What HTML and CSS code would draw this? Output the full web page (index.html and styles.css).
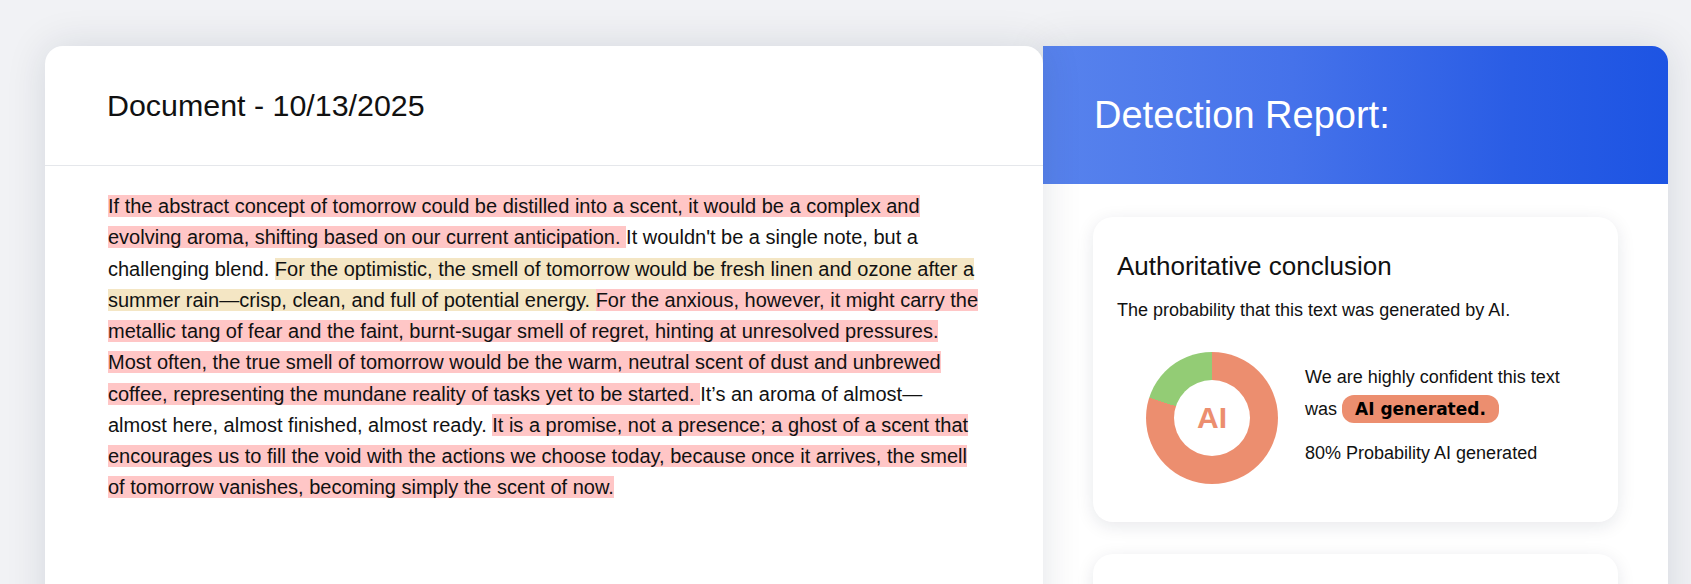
FILE: index.html
```html
<!DOCTYPE html>
<html lang="en">
<head>
<meta charset="utf-8">
<title>Detection Report</title>
<link rel="stylesheet" href="styles.css">
</head>
<body>
<div class="page">
  <section class="doc">
    <header class="doc-head">
      <h1 class="doc-title">Document - 10/13/2025</h1>
    </header>
    <div class="doc-body">
      <p class="doc-text"><span class="hl-red">If the abstract concept of tomorrow could be distilled into a scent, it would be a complex and evolving aroma, shifting based on our current anticipation. </span>It wouldn't be a single note, but a challenging blend. <span class="hl-yel">For the optimistic, the smell of tomorrow would be fresh linen and ozone after a summer rain—crisp, clean, and full of potential energy. </span><span class="hl-red">For the anxious, however, it might carry the metallic tang of fear and the faint, burnt-sugar smell of regret, hinting at unresolved pressures. </span><span class="hl-red">Most often, the true smell of tomorrow would be the warm, neutral scent of dust and unbrewed coffee, representing the mundane reality of tasks yet to be started. </span>It’s an aroma of almost—almost here, almost finished, almost ready. <span class="hl-red">It is a promise, not a presence; a ghost of a scent that encourages us to fill the void with the actions we choose today, because once it arrives, the smell of tomorrow vanishes, becoming simply the scent of now.</span></p>
    </div>
  </section>
  <aside class="report">
    <header class="report-head">
      <h2 class="report-title">Detection Report:</h2>
    </header>
    <div class="report-body">
      <div class="card">
        <h3 class="card-title">Authoritative conclusion</h3>
        <p class="card-desc">The probability that this text was generated by AI.</p>
        <div class="verdict">
          <div class="donut">
            <div class="donut-hole"><span class="donut-label">AI</span></div>
          </div>
          <div class="verdict-text">
            <p class="verdict-line">We are highly confident this text was <span class="badge">AI generated.</span></p>
            <p class="verdict-prob">80% Probability AI generated</p>
          </div>
        </div>
      </div>
      <div class="card card-next"></div>
    </div>
  </aside>
</div>
</body>
</html>
```
FILE: styles.css
```css
html, body {
  margin: 0;
  padding: 0;
}
body {
  background: #f1f2f5;
  font-family: "Liberation Sans", Arial, sans-serif;
  color: #111;
  overflow: hidden;
}
.page {
  display: flex;
  align-items: flex-start;
  padding: 46px 23px 0 45px;
}
.doc {
  width: 998px;
  flex: none;
  background: #fff;
  border-radius: 18px;
  box-shadow: 0 0 40px rgba(20, 30, 60, 0.12);
  position: relative;
  z-index: 1;
  min-height: 720px;
}
.doc-head {
  height: 119px;
  display: flex;
  align-items: center;
  padding: 0 62px;
  border-bottom: 1px solid #e5e7eb;
}
.doc-title {
  margin: 0;
  font-size: 30.4px;
  font-weight: 400;
  color: #111;
}
.doc-body {
  padding: 25px 63px 40px;
}
.doc-text {
  margin: 0;
  font-size: 20px;
  line-height: 31.25px;
}
.hl-red {
  background: #ffc6c6;
}
.hl-yel {
  background: #f4e6c4;
}
.report {
  flex: 1;
  background: #fff;
  border-radius: 0 16px 0 0;
  box-shadow: 0 0 40px rgba(20, 30, 60, 0.12);
  min-height: 720px;
}
.report-head {
  height: 138px;
  display: flex;
  align-items: center;
  padding-left: 51px;
  border-radius: 0 16px 0 0;
  background: linear-gradient(90deg, #5883ed 0%, #4572ea 40%, #2a5de5 75%, #1d54e3 100%);
}
.report-title {
  margin: 0;
  font-size: 38px;
  font-weight: 400;
  color: #fff;
}
.report-body {
  padding: 33px 50px;
  display: flex;
  flex-direction: column;
  gap: 32px;
}
.card {
  background: #fff;
  border-radius: 20px;
  box-shadow: 0 4px 18px rgba(20, 30, 60, 0.10);
  padding: 34px 24px 0;
  height: 305px;
  box-sizing: border-box;
}
.card-title {
  margin: 0;
  font-size: 26px;
  font-weight: 400;
  color: #111;
}
.card-desc {
  margin: 18px 0 0;
  font-size: 18px;
}
.verdict {
  margin-top: 31px;
  padding-left: 29px;
  display: flex;
  align-items: center;
  gap: 27px;
}
.donut {
  width: 132px;
  height: 132px;
  flex: none;
  border-radius: 50%;
  background: conic-gradient(#ec8e6f 0 80%, #93cc75 80% 100%);
  display: flex;
  align-items: center;
  justify-content: center;
}
.donut-hole {
  width: 76px;
  height: 76px;
  border-radius: 50%;
  background: #fff;
  display: flex;
  align-items: center;
  justify-content: center;
}
.donut-label {
  font-size: 30px;
  font-weight: 700;
  color: #ec8e6f;
}
.verdict-text {
  width: 270px;
  font-size: 18px;
  padding-bottom: 7px;
}
.verdict-line {
  margin: 0;
  line-height: 32px;
}
.verdict-prob {
  margin: 12px 0 0;
  line-height: 32px;
}
.badge {
  display: inline-block;
  padding: 4px 13px;
  border-radius: 12px;
  background: #ec8e6f;
  color: #000;
  font-family: "DejaVu Sans", sans-serif;
  font-weight: 700;
  font-size: 17px;
  line-height: 20px;
}
.card-next {
  height: 200px;
}
```
